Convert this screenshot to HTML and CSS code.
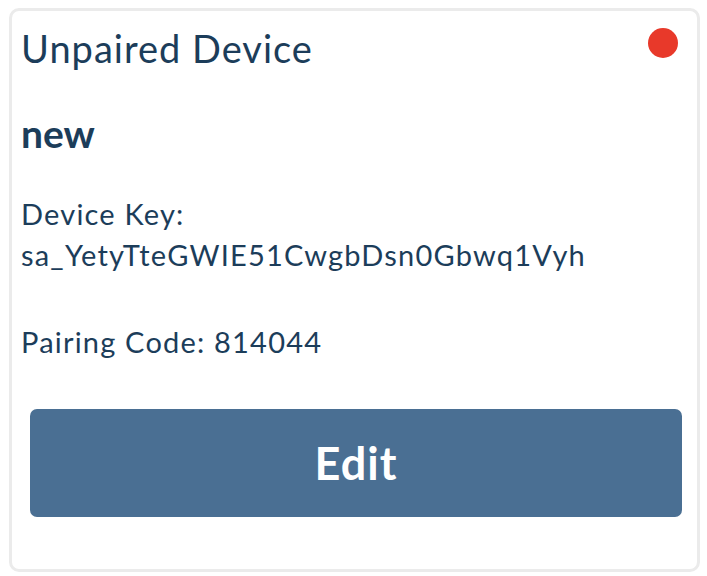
FILE: index.html
```html
<!DOCTYPE html>
<html lang="en">
<head>
  <meta charset="UTF-8" />
  <meta name="viewport" content="width=device-width, initial-scale=1.0"/>
  <title>Unpaired Device</title>
  <link rel="stylesheet" href="styles.css">
</head>
<body>
  <div class="card">
    <div class="card-header">
      <h2 class="title">Unpaired Device</h2>
      <span class="status-dot"></span>
    </div>
    <div class="name">new</div>
    <div class="field">Device Key:<br>sa_YetyTteGWIE51CwgbDsn0Gbwq1Vyh</div>
    <div class="field code">Pairing Code: 814044</div>
    <button class="edit-btn">Edit</button>
  </div>
</body>
</html>
```

FILE: styles.css
```css
:root {
  --text: #1c3d5a;
  --border: #ebebeb;
  --accent: #4a6f93;
  --red: #e8392a;
  --font: 'Lato', 'Open Sans', sans-serif;
}

body {
  margin: 0;
  font-family: var(--font);
  color: var(--text);
  background: #fff;
}

.card {
  margin: 8px 7px 4px 9px;
  height: 564px;
  box-sizing: border-box;
  border: 3px solid var(--border);
  border-radius: 10px;
  padding: 15px 0 0 9px;
}

.card-header {
  display: flex;
  justify-content: space-between;
  align-items: flex-start;
  padding-right: 19px;
}

.title {
  margin: 0;
  font-size: 38px;
  font-weight: normal;
  line-height: 44px;
  letter-spacing: 1px;
}

.status-dot {
  width: 30px;
  height: 30px;
  margin-top: 2px;
  border-radius: 50%;
  background: var(--red);
}

.name {
  margin-top: 41px;
  font-size: 39px;
  font-weight: bold;
  line-height: 44px;
}

.field {
  margin-top: 38px;
  font-size: 29px;
  line-height: 41px;
  letter-spacing: 1.2px;
}

.field.code {
  margin-top: 46px;
}

.edit-btn {
  display: block;
  width: 652px;
  height: 108px;
  margin: 47px 0 0 9px;
  border: none;
  border-radius: 7px;
  background: var(--accent);
  color: #fff;
  font-family: var(--font);
  font-size: 45px;
  font-weight: bold;
  letter-spacing: 1px;
  cursor: pointer;
}
```
